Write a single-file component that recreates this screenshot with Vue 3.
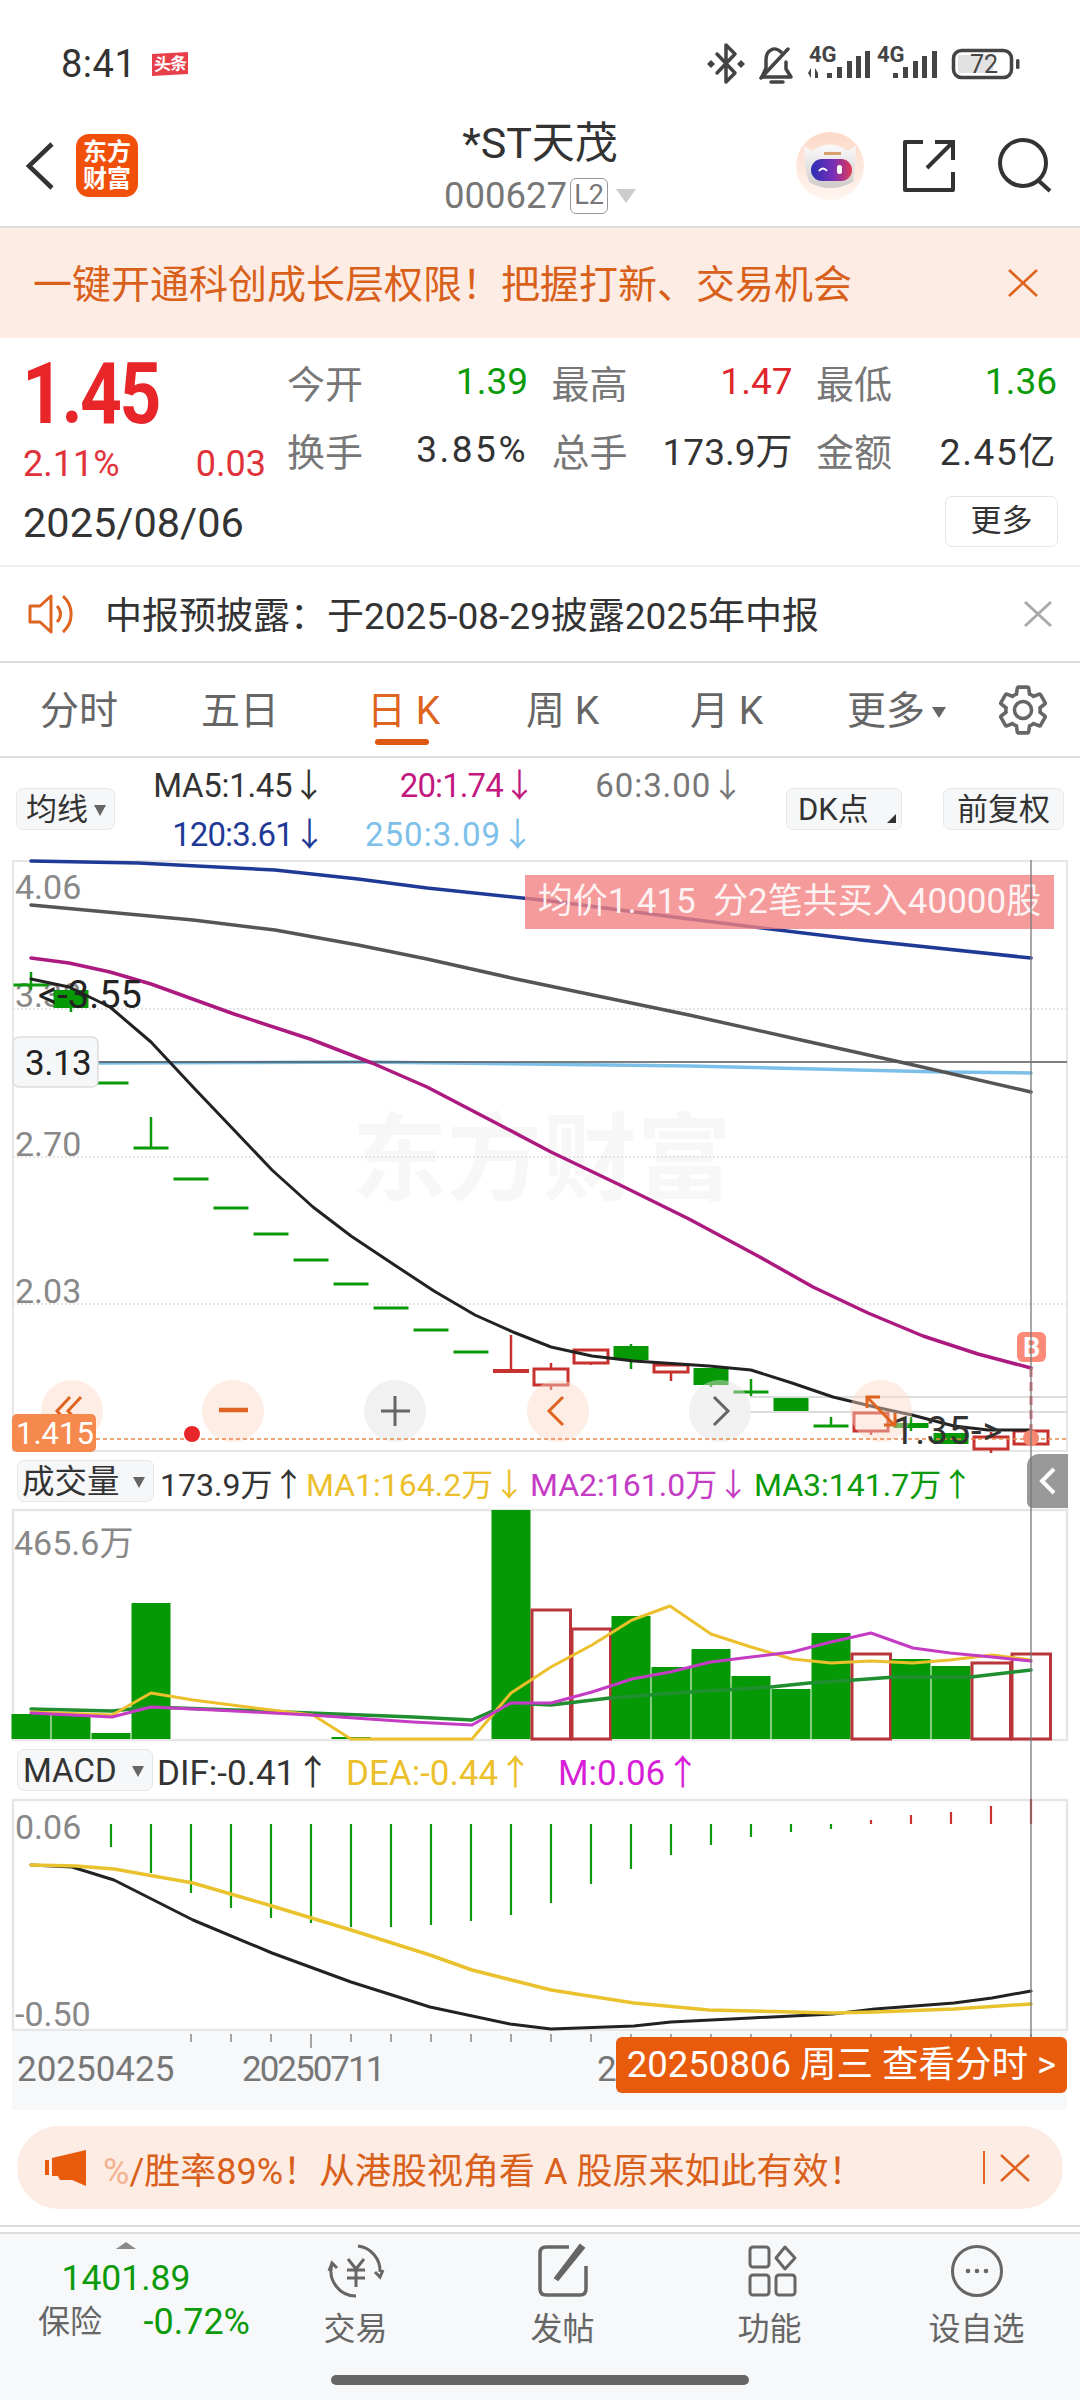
<script setup>
const pts = (a) => a.map((p) => p.join(',')).join(' ')
const X = (i) => 31 + 40 * i

const stats = [
  { l: '今开', v: '1.39', c: 'green' },
  { l: '最高', v: '1.47', c: 'red' },
  { l: '最低', v: '1.36', c: 'green' },
  { l: '换手', v: '3.85%', c: 'wide' },
  { l: '总手', v: '173.9万', c: '' },
  { l: '金额', v: '2.45亿', c: 'wide2' },
]

// i, kind, bodyTop, bodyBottom, wickTop, wickBottom
const candles = [
  [0, 'g', 985, 985, 972, 990], [1, 'g', 990, 1008, 988, 1012], [2, 'g', 1083, 1083, 1083, 1083],
  [3, 'g', 1148, 1148, 1117, 1148], [4, 'g', 1179, 1179, 1179, 1179], [5, 'g', 1208, 1208, 1208, 1208],
  [6, 'g', 1234, 1234, 1234, 1234], [7, 'g', 1260, 1260, 1260, 1260], [8, 'g', 1284, 1284, 1284, 1284],
  [9, 'g', 1308, 1308, 1308, 1308], [10, 'g', 1330, 1330, 1330, 1330], [11, 'g', 1352, 1352, 1352, 1352],
  [12, 'R', 1371, 1371, 1335, 1371], [13, 'r', 1369, 1385, 1363, 1390], [14, 'r', 1350, 1363, 1350, 1365],
  [15, 'g', 1346, 1360, 1344, 1369], [16, 'r', 1365, 1372, 1365, 1381], [17, 'g', 1368, 1385, 1368, 1387],
  [18, 'g', 1392, 1392, 1379, 1396], [19, 'g', 1398, 1411, 1398, 1411], [20, 'g', 1426, 1426, 1417, 1426],
  [21, 'r', 1413, 1431, 1413, 1435], [22, 'g', 1423, 1428, 1417, 1431], [23, 'g', 1433, 1444, 1433, 1444],
  [24, 'r', 1437, 1449, 1432, 1453], [25, 'r', 1431, 1444, 1431, 1444],
]
const flat = (c) => c[3] - c[2] < 3

const ma120 = [[31,861],[138,863],[275,870],[358,879],[427,888],[551,901],[689,919],[861,940],[1031,958]]
const ma60 = [[31,905],[193,920],[275,930],[358,945],[427,959],[516,979],[689,1015],[792,1038],[909,1064],[1031,1092]]
const ma20 = [[31,958],[69,963],[110,972],[151,984],[234,1014],[310,1039],[372,1063],[427,1087],[496,1123],[551,1152],[620,1185],[689,1219],[758,1256],[813,1287],[868,1313],[923,1336],[978,1354],[1031,1368]]
const ma5 = [[31,979],[69,987],[110,1007],[151,1042],[193,1087],[234,1130],[272,1170],[313,1207],[351,1236],[393,1264],[434,1291],[475,1315],[513,1332],[551,1347],[592,1356],[634,1361],[709,1366],[751,1370],[792,1383],[833,1397],[875,1407],[912,1415],[954,1426],[988,1430],[1031,1430]]
const ma250 = [[98,1063],[365,1062],[689,1066],[943,1072],[1031,1073]]

const circles = [
  [72, 'o'], [233, 'o'], [395, 'n'], [558, 'o'], [720, 'n'], [881, 'o'],
]

const bars = [
  [0,'g',1714],[1,'g',1715],[2,'g',1733],[3,'g',1603],[8,'g',1737],[12,'g',1510],[13,'r',1610],[14,'r',1629],
  [15,'g',1616],[16,'g',1667],[17,'g',1649],[18,'g',1676],[19,'g',1689],[20,'g',1633],[21,'r',1654],
  [22,'g',1659],[23,'g',1666],[24,'r',1663],[25,'r',1654],
]
const vol1 = [[31,1712],[112,1715],[151,1693],[193,1700],[255,1708],[313,1715],[351,1739],[472,1739],[511,1693],[551,1667],[592,1645],[632,1620],[670,1606],[711,1634],[751,1647],[792,1659],[831,1663],[871,1661],[913,1663],[950,1660],[992,1655],[1031,1660]]
const vol2 = [[31,1713],[112,1717],[151,1707],[234,1711],[310,1715],[413,1722],[472,1725],[511,1703],[551,1703],[592,1692],[632,1679],[670,1672],[711,1662],[751,1657],[792,1652],[831,1642],[871,1633],[913,1648],[950,1653],[992,1657],[1031,1661]]
const vol3 = [[31,1709],[112,1711],[151,1707],[234,1710],[310,1713],[413,1717],[472,1720],[511,1703],[551,1705],[610,1698],[689,1692],[771,1687],[809,1683],[854,1680],[895,1677],[971,1677],[1031,1670]]

const macd = [
  [2,1847],[3,1873],[4,1893],[5,1908],[6,1918],[7,1923],[8,1927],[9,1927],[10,1925],[11,1921],[12,1915],[13,1903],
  [14,1884],[15,1869],[16,1855],[17,1845],[18,1837],[19,1832],[20,1829],[21,1820],[22,1815],[23,1812],[24,1806],[25,1799],
]
const dea = [[31,1865],[76,1866],[114,1869],[193,1883],[272,1906],[351,1930],[430,1955],[472,1970],[551,1990],[634,2003],[709,2010],[792,2012],[833,2013],[875,2012],[954,2009],[1031,2004]]
const dif = [[31,1865],[72,1867],[114,1880],[193,1920],[272,1953],[351,1982],[430,2007],[510,2024],[551,2029],[634,2026],[671,2022],[751,2018],[833,2014],[875,2009],[954,2003],[992,1998],[1031,1991]]
const ticks = [4,5,6,7,8,9,10,11,12,13,14,15,16,17,18,19,20,21,22,23,24,25]
</script>

<template>
  <div class="page">
    <div class="status">
      <span class="time">8:41</span>
      <span class="toutiao">头条</span>
      <svg class="status-icons" viewBox="708 34 314 50" width="314" height="50">
        <g fill="none" stroke="#444" stroke-width="3.5" stroke-linejoin="round" stroke-linecap="round">
          <path d="M717 54 L735 73 L726 82 V45 L735 54 L717 73" />
          <path d="M788 49 L761 78" />
          <path d="M762 77 H791 L786 69 V62 M781 52 C778 49 774 48 771 50 C767 52 766 56 766 60 V68 L762 77" />
          <path d="M771 82 H783" />
          <rect x="953.5" y="50.5" width="58" height="27" rx="8" />
        </g>
        <path d="M711 60 l4 4 -4 4 -4 -4z M741 60 l4 4 -4 4 -4 -4z" fill="#444" />
        <text x="809" y="62" class="g4">4G</text>
        <text x="877" y="62" class="g4">4G</text>
        <path d="M811 68 v10 l-3 -5z M815 68 l3 5 h-3z M815 73 h3 v5 h-3z" fill="#444" />
        <g fill="#444">
          <rect x="827" y="73" width="5" height="5" /><rect x="837" y="67" width="5" height="11" /><rect x="847" y="61" width="5" height="17" /><rect x="856" y="56" width="5" height="22" /><rect x="865" y="51" width="5" height="27" />
          <rect x="893" y="73" width="5" height="5" /><rect x="903" y="67" width="5" height="11" /><rect x="913" y="61" width="5" height="17" /><rect x="922" y="56" width="5" height="22" /><rect x="932" y="51" width="5" height="27" />
          <rect x="1016" y="59" width="3.5" height="10" rx="1.5" />
        </g>
        <rect x="958" y="55" width="35" height="18" fill="#e2e2e2" />
        <text x="970" y="73" class="batt">72</text>
      </svg>
    </div>

    <header class="head">
      <div class="head-left">
        <svg class="back" viewBox="0 0 30 50" width="30" height="50"><path d="M27 3 L4 25 L27 47" fill="none" stroke="#333" stroke-width="4.5" /></svg>
        <div class="logo"><span>东方</span><span>财富</span></div>
      </div>
      <div class="head-mid">
        <div class="title">*ST天茂</div>
        <div class="code"><span>000627</span><span class="l2">L2</span><i class="tri-code"></i></div>
      </div>
      <div class="head-right">
        <svg class="avatar" viewBox="0 0 68 68" width="68" height="68">
          <defs>
            <linearGradient id="visor" x1="0" x2="1" y1="0" y2="0"><stop offset="0" stop-color="#2a2fb4" /><stop offset=".55" stop-color="#7a2fb8" /><stop offset="1" stop-color="#e03a55" /></linearGradient>
            <linearGradient id="peach" x1="0" x2="0" y1="0" y2="1"><stop offset="0" stop-color="#fdd9c8" /><stop offset="1" stop-color="#fff5f0" /></linearGradient>
            <linearGradient id="shell" x1="0" x2="0" y1="0" y2="1"><stop offset="0" stop-color="#fbfafa" /><stop offset="1" stop-color="#cfcaca" /></linearGradient>
          </defs>
          <circle cx="34" cy="34" r="34" fill="url(#peach)" />
          <path d="M8 14 L16 19 Q34 6 52 19 L60 14 L59 34 L57 50 Q34 62 13 50 L9 34Z" fill="url(#shell)" />
          <rect x="28" y="20" width="17" height="3" fill="#d9a070" />
          <rect x="15" y="27" width="41" height="22" rx="11" fill="url(#visor)" />
          <path d="M23 39 q4 -5 8 0" stroke="#fff" stroke-width="2" fill="none" />
          <rect x="41" y="33" width="5" height="9" rx="2.5" fill="#fff" />
        </svg>
        <svg class="share" viewBox="904 140 52 52" width="52" height="52">
          <path d="M924 142 H906 V190 H954 V172" fill="none" stroke="#333" stroke-width="4" stroke-linejoin="round" />
          <path d="M928 168 L953 143 M936 142 H954 V160" fill="none" stroke="#333" stroke-width="4" />
        </svg>
        <svg class="search" viewBox="999 138 54 54" width="54" height="54">
          <circle cx="1024" cy="163" r="23" fill="none" stroke="#333" stroke-width="4" />
          <path d="M1040 181 L1051 191" stroke="#333" stroke-width="4" />
        </svg>
      </div>
    </header>

    <div class="banner">
      <span class="ban-t">一键开通科创成长层权限！把握打新、交易机会</span>
      <svg viewBox="0 0 30 28" width="30" height="28"><path d="M1 1 L29 27 M29 1 L1 27" stroke="#de6420" stroke-width="2.6" fill="none" /></svg>
    </div>

    <section class="quote">
      <div class="quote-top">
        <div class="q-left">
          <div class="price">1.45</div>
          <div class="chg"><span>2.11%</span><span>0.03</span></div>
        </div>
        <div class="stats">
          <div v-for="s in stats" :key="s.l" class="stat">
            <span class="s-l">{{ s.l }}</span><span :class="['s-v', s.c]">{{ s.v }}</span>
          </div>
        </div>
      </div>
      <div class="quote-bot">
        <span class="date">2025/08/06</span>
        <span class="more">更多</span>
      </div>
    </section>

    <div class="notice">
      <svg viewBox="28 595 46 40" width="46" height="40">
        <path d="M30 607 H40 L51 597 V633 L40 623 H30Z M57 607 A11 11 0 0 1 57 623 M63 597 A24 24 0 0 1 63 633" fill="none" stroke="#de6420" stroke-width="3" stroke-linejoin="round" />
      </svg>
      <span class="n-text">中报预披露：于2025-08-29披露2025年中报</span>
      <svg viewBox="0 0 28 26" width="28" height="26"><path d="M1 1 L27 25 M27 1 L1 25" stroke="#aaa" stroke-width="3" fill="none" /></svg>
    </div>

    <nav class="tabs">
      <span class="tab t1">分时</span>
      <span class="tab t2">五日</span>
      <span class="tab t3 on">日 K</span>
      <span class="tab t4">周 K</span>
      <span class="tab t5">月 K</span>
      <span class="tab t6">更多<i class="tri-more"></i></span>
      <svg class="gear" viewBox="1.5 1.5 21 21" width="50" height="50">
        <path d="M19.14 12.94c.04-.3.06-.61.06-.94 0-.32-.02-.64-.07-.94l2.03-1.58a.49.49 0 0 0 .12-.61l-1.92-3.32a.488.488 0 0 0-.59-.22l-2.39.96c-.5-.38-1.03-.7-1.62-.94l-.36-2.54a.484.484 0 0 0-.48-.41h-3.84c-.24 0-.43.17-.47.41l-.36 2.54c-.59.24-1.13.57-1.62.94l-2.39-.96c-.22-.08-.47 0-.59.22L2.74 8.87c-.12.21-.08.47.12.61l2.03 1.58c-.05.3-.09.63-.09.94s.02.64.07.94l-2.03 1.58a.49.49 0 0 0-.12.61l1.92 3.32c.12.22.37.29.59.22l2.39-.96c.5.38 1.03.7 1.62.94l.36 2.54c.05.24.24.41.48.41h3.84c.24 0 .44-.17.47-.41l.36-2.54c.59-.24 1.13-.56 1.62-.94l2.39.96c.22.08.47 0 .59-.22l1.92-3.32c.12-.22.07-.47-.12-.61l-2.01-1.58zM12 15.6c-1.98 0-3.6-1.62-3.6-3.6s1.62-3.6 3.6-3.6 3.6 1.62 3.6 3.6-1.62 3.6-3.6 3.6z" fill="none" stroke="#666" stroke-width="1.5" />
      </svg>
    </nav>

    <div class="ma-row">
      <span class="chip c-ma">均线<i class="tri-chip"></i></span>
      <div class="ma-grid">
        <span class="black">MA5:1.45↓</span>
        <span class="mag">20:1.74↓</span>
        <span class="gray">60:3.00↓</span>
        <span class="blue">120:3.61↓</span>
        <span class="sky">250:3.09↓</span>
      </div>
      <span class="chip c-dk">DK点<i class="corner"></i></span>
      <span class="chip c-fq">前复权</span>
    </div>

    <div class="charts">
      <svg class="main" viewBox="0 860 1080 592" width="1080" height="592">
        <rect x="13" y="861" width="1054" height="590" fill="none" stroke="#e6e6e6" stroke-width="2" />
        <text x="352" y="1193" class="wm">东方财富</text>
        <g stroke="#e4e4e4" stroke-width="2" stroke-dasharray="2 2">
          <path d="M13 1009 H1067 M13 1157 H1067 M13 1304 H1067" />
        </g>
        <path d="M750 1397 H1067 M750 1412 H1067" stroke="#dcdcdc" stroke-width="2" />
        <text x="15" y="899" class="axis">4.06</text>
        <text x="15" y="1007" class="axis">3.38</text>
        <text x="15" y="1156" class="axis">2.70</text>
        <text x="15" y="1303" class="axis">2.03</text>
        <g v-for="c in candles" :key="c[0]">
          <template v-if="c[1] === 'g'">
            <path :d="`M${X(c[0])} ${c[4]} V${c[5]}`" stroke="#0a9a0a" stroke-width="2.5" />
            <path v-if="flat(c)" :d="`M${X(c[0]) - 17.5} ${c[2]} h35`" stroke="#0a9a0a" stroke-width="3" />
            <rect v-else :x="X(c[0]) - 17.5" :y="c[2]" width="35" :height="c[3] - c[2]" fill="#059a05" />
          </template>
          <template v-else-if="c[1] === 'R'">
            <path :d="`M${X(c[0])} ${c[4]} V${c[5]}`" stroke="#c8322e" stroke-width="2.5" />
            <path :d="`M${X(c[0]) - 18} ${c[2]} h36`" stroke="#c8322e" stroke-width="4" />
          </template>
          <template v-else>
            <path :d="`M${X(c[0])} ${c[4]} V${c[5]}`" stroke="#c8322e" stroke-width="2.5" />
            <rect :x="X(c[0]) - 17" :y="c[2]" width="34" :height="c[3] - c[2]" fill="#fff" stroke="#c8322e" stroke-width="3" />
          </template>
        </g>
        <polyline :points="pts(ma250)" class="ln" stroke="#7cc0ea" stroke-width="3.5" />
        <path d="M98 1062 H1067" stroke="#555" stroke-width="1.5" />
        <polyline :points="pts(ma120)" class="ln" stroke="#1f3a96" stroke-width="3.5" />
        <polyline :points="pts(ma60)" class="ln" stroke="#555" stroke-width="3.5" />
        <polyline :points="pts(ma20)" class="ln" stroke="#ac1a80" stroke-width="3.5" />
        <polyline :points="pts(ma5)" class="ln" stroke="#222" stroke-width="3" />

        <g v-for="c in circles" :key="c[0]">
          <ellipse :cx="c[0]" cy="1411" rx="31" ry="31" :fill="c[1] === 'o' ? 'rgba(250,215,195,.45)' : 'rgba(225,225,225,.45)'" />
        </g>
        <path d="M70 1397 L57 1411 L70 1425 M81 1397 L68 1411 L81 1425" fill="none" stroke="#de6420" stroke-width="3" />
        <path d="M219 1410 H248" stroke="#de6420" stroke-width="4.5" />
        <path d="M381 1411 H410 M395 1396 V1426" stroke="#666" stroke-width="3" />
        <path d="M563 1397 L549 1411 L563 1425" fill="none" stroke="#de6420" stroke-width="3" />
        <path d="M714 1397 L728 1411 L714 1425" fill="none" stroke="#666" stroke-width="3" />
        <path d="M867 1408 V1397 H880 M868 1398 L894 1425 M895 1413 V1425 H884" fill="none" stroke="#de6420" stroke-width="3" />

        <path d="M96 1439 H1067" stroke="#e8864a" stroke-width="1.5" stroke-dasharray="4 3" />
        <circle cx="192" cy="1434" r="8" fill="#e8262a" />
        <path d="M1031 1368 V1431" stroke="#d9737a" stroke-width="3" stroke-dasharray="9 5" />
        <circle cx="1031" cy="1438" r="8" fill="#f58870" />
        <rect x="1017" y="1332" width="29" height="30" rx="6" fill="#fb8a78" />
        <text x="1031.5" y="1357" class="b-mark">B</text>

        <text x="38" y="1008" class="tag">&lt;-3.55</text>
        <text x="893" y="1444" class="tag t135">1.35-&gt;</text>

        <rect x="13" y="1037" width="85" height="50" rx="6" fill="#f6f7f9" stroke="#ddd" stroke-width="1.5" />
        <text x="25" y="1075" class="lab-k">3.13</text>
        <rect x="12" y="1414" width="84" height="38" rx="5" fill="#f68a4e" />
        <text x="16" y="1444" class="lab-w">1.415</text>
      </svg>
      <div class="tip">均价1.415&nbsp;&nbsp;分2笔共买入40000股</div>

      <div class="ind-row vol">
        <span class="chip c-ind">成交量<i class="tri-chip"></i></span>
        <span class="i1">173.9万↑</span>
        <span class="i2 yel">MA1:164.2万↓</span>
        <span class="i3 pur">MA2:161.0万↓</span>
        <span class="i4 grn">MA3:141.7万↑</span>
      </div>
      <svg class="volc" viewBox="0 1509 1080 232" width="1080" height="232">
        <rect x="13" y="1510" width="1054" height="230" fill="none" stroke="#e6e6e6" stroke-width="2.5" />
        <text x="14" y="1555" class="axis">465.6万</text>
        <g v-for="b in bars" :key="b[0]">
          <rect v-if="b[1] === 'g'" :x="X(b[0]) - 19.5" :y="b[2]" width="39" :height="1739 - b[2]" fill="#059a05" />
          <rect v-else :x="X(b[0]) - 19" :y="b[2]" width="38.5" :height="1739 - b[2]" fill="#fff" stroke="#b8353a" stroke-width="3" />
        </g>
        <polyline :points="pts(vol3)" class="ln" stroke="#1f8f2f" stroke-width="3.5" />
        <polyline :points="pts(vol1)" class="ln" stroke="#ecbf2c" stroke-width="3" />
        <polyline :points="pts(vol2)" class="ln" stroke="#c43cc4" stroke-width="3" />
      </svg>

      <div class="ind-row mac">
        <span class="chip c-ind2">MACD<i class="tri-chip"></i></span>
        <span class="m1">DIF:-0.41↑</span>
        <span class="m2 yel2">DEA:-0.44↑</span>
        <span class="m3 pnk">M:0.06↑</span>
      </div>
      <svg class="macc" viewBox="0 1799 1080 232" width="1080" height="232">
        <rect x="13" y="1800" width="1054" height="230" fill="none" stroke="#e6e6e6" stroke-width="2.5" />
        <text x="15" y="1839" class="axis">0.06</text>
        <text x="15" y="2026" class="axis">-0.50</text>
        <path v-for="m in macd" :key="m[0]" :d="`M${X(m[0])} 1824 V${m[1]}`" :stroke="m[0] < 21 ? '#0a9a0a' : '#c8322e'" stroke-width="2.2" />
        <polyline :points="pts(dif)" class="ln" stroke="#222" stroke-width="3" />
        <polyline :points="pts(dea)" class="ln" stroke="#e9c22e" stroke-width="3.5" />
      </svg>

      <div class="axisbar">
        <svg class="ticks" viewBox="0 0 1055 16" width="1055" height="16">
          <path v-for="t in ticks" :key="t" :d="`M${X(t) - 12} 2 V${t === 7 ? 16 : 10}`" stroke="#888" stroke-width="1.5" />
        </svg>
        <div class="dates"><span class="d1">20250425</span><span class="d2">20250711</span><span class="d3">2</span></div>
        <div class="go">20250806 周三 查看分时 &gt;</div>
      </div>

      <div class="handle"><svg viewBox="0 0 18 28" width="18" height="28"><path d="M15 2 L3 14 L15 26" fill="none" stroke="#fff" stroke-width="4" /></svg></div>
      <div class="cross"></div>
    </div>

    <div class="ad">
      <svg viewBox="45 2150 41 36" width="41" height="36">
        <path d="M45 2160 h4 v15 h-4z M52 2158 L86 2150 V2186 L72 2180 L60 2180 L58 2176 H52Z" fill="#e85a0c" />
      </svg>
      <span class="ad-text"><b>%</b>/胜率89%！从港股视角看 A 股原来如此有效！</span>
      <i class="ad-sep"></i>
      <svg viewBox="0 0 30 28" width="30" height="28"><path d="M1 1 L29 27 M29 1 L1 27" stroke="#de6420" stroke-width="2.6" fill="none" /></svg>
    </div>

    <div class="rule"></div>

    <footer class="foot">
      <div class="idx">
        <i class="tri-up"></i>
        <div class="idx-v">1401.89</div>
        <div class="idx-r"><span>保险</span><b>-0.72%</b></div>
      </div>
      <div class="nav">
        <svg viewBox="0 0 60 54" width="60" height="54">
          <path d="M32 2 A25 25 0 0 1 54 28 M30 52 A25 25 0 0 1 6 20" fill="none" stroke="#666" stroke-width="3" />
          <path d="M3 27 L6 19 L11 24" fill="none" stroke="#666" stroke-width="3" />
          <path d="M57 26 L54 33 L49 28" fill="none" stroke="#666" stroke-width="3" />
          <path d="M22 15 L30 25 L38 15 M21 26 H39 M21 34 H39 M30 25 V43" fill="none" stroke="#666" stroke-width="3" />
        </svg>
        <span>交易</span>
      </div>
      <div class="nav">
        <svg viewBox="0 0 60 54" width="60" height="54">
          <path d="M36 3 H13 Q7 3 7 9 V45 Q7 51 13 51 H47 Q53 51 53 45 V22" fill="none" stroke="#666" stroke-width="3.5" />
          <path d="M22 34 L25 36 L51 4 L47 1Z" fill="#666" stroke="#666" stroke-width="2" />
        </svg>
        <span>发帖</span>
      </div>
      <div class="nav">
        <svg viewBox="0 0 60 54" width="60" height="54">
          <g fill="none" stroke="#666" stroke-width="3">
            <rect x="10" y="3" width="19" height="20" rx="3" />
            <rect x="10" y="31" width="19" height="20" rx="3" />
            <rect x="36" y="31" width="19" height="20" rx="3" />
            <path d="M45 3 L55 14 L45 25 L36 14Z" stroke-linejoin="round" />
          </g>
        </svg>
        <span>功能</span>
      </div>
      <div class="nav">
        <svg viewBox="0 0 60 54" width="60" height="54">
          <circle cx="30" cy="27" r="24.5" fill="none" stroke="#666" stroke-width="3" />
          <circle cx="21" cy="27" r="2.3" fill="#666" /><circle cx="30" cy="27" r="2.3" fill="#666" /><circle cx="39" cy="27" r="2.3" fill="#666" />
        </svg>
        <span>设自选</span>
      </div>
      <div class="homebar"></div>
    </footer>
  </div>
</template>

<style scoped>
.page {
  width: 1080px;
  height: 2400px;
  overflow: hidden;
  background: #fff;
  display: flex;
  flex-direction: column;
  font-family: Roboto, "Noto Sans CJK SC", sans-serif;
  color: #333;
}
.page i { font-style: normal; display: inline-block; }
svg { display: block; flex: none; overflow: visible; }

.status {
  height: 105px;
  box-sizing: border-box;
  padding: 23px 0 0 61px;
  display: flex;
  align-items: center;
}
.time { font-size: 38px; color: #333; width: 91px; letter-spacing: .5px; }
.toutiao {
  width: 36px; height: 22px; background: #e8404a; color: #fff;
  font-size: 17px; line-height: 22px; text-align: center; font-weight: 700;
  letter-spacing: -1px; transform: skewY(-3deg);
}
.status-icons { margin-left: 520px; margin-bottom: 10px; }
.g4 { font-size: 22px; font-weight: 700; fill: #444; font-family: Roboto, sans-serif; }
.batt { font-size: 25px; fill: #444; font-family: Roboto, sans-serif; }

.head {
  height: 123px;
  box-sizing: border-box;
  border-bottom: 2px solid #ddd;
  display: grid;
  grid-template-columns: 1fr auto 1fr;
  position: relative;
}
.head-left { display: flex; align-items: flex-start; padding: 29px 0 0 25px; }
.back { margin-top: 7px; }
.logo {
  margin-left: 21px; width: 62px; height: 63px; background: #f0500a; border-radius: 13px;
  color: #fff; font-size: 24px; font-weight: 700; line-height: 27px;
  display: flex; flex-direction: column; align-items: center; justify-content: center;
}
.head-mid { display: flex; flex-direction: column; align-items: center; padding-top: 14px; }
.title { font-size: 43px; line-height: 48px; color: #333; }
.code { display: flex; align-items: center; font-size: 36.5px; line-height: 40px; color: #777; margin-top: 9px; }
.l2 {
  margin-left: 3px; width: 38px; height: 36px; box-sizing: border-box; border: 1.5px solid #999;
  border-radius: 6px; font-size: 27px; line-height: 33px; text-align: center;
}
.tri-code {
  margin-left: 8px; width: 0; height: 0; border-left: 10px solid transparent;
  border-right: 10px solid transparent; border-top: 14px solid #ccc;
}
.head-right { display: flex; align-items: flex-start; justify-content: flex-end; padding: 27px 28px 0 0; }
.share { margin: 8px 0 0 39px; }
.search { margin: 6px 0 0 43px; }

.banner {
  height: 110px; background: #fcece4; display: flex; align-items: center;
  justify-content: space-between; padding: 0 42px 0 33px; color: #d9601a;
  font-size: 39px;
}
.ban-t { margin-top: -5px; }

.quote { height: 229px; box-sizing: border-box; border-bottom: 2px solid #eee; padding: 0 22px 0 22px; }
.quote-top { display: flex; height: 154px; }
.q-left { width: 245px; }
.price {
  font-size: 86px; line-height: 84px; margin-top: 14px; margin-bottom: -3px; color: #e8262a; font-weight: 700; letter-spacing: -3px;
  transform: scaleX(.85); transform-origin: left center;
}
.chg { display: flex; justify-content: space-between; color: #e0323a; font-size: 36px; line-height: 48px; width: 243px; margin: 7px 0 0 1px; }
.stats { margin: 9px 0 0 22px; display: grid; grid-template-columns: repeat(3, 239px); grid-auto-rows: 68px; column-gap: 25.5px; }
.stat { display: flex; justify-content: space-between; align-items: center; }
.s-l { font-size: 38px; color: #777; margin-left: -2px; }
.s-v { font-size: 37px; color: #333; }
.s-v.green { color: #0a9a0a; }
.s-v.red { color: #e0262a; }
.s-v.wide { letter-spacing: 2.5px; }
.s-v.wide2 { letter-spacing: 1.6px; }
.quote-bot { display: flex; justify-content: space-between; align-items: flex-start; }
.date { font-size: 41.5px; line-height: 50px; color: #333; margin: 6px 0 0 1px; }
.more {
  width: 113px; height: 51px; box-sizing: border-box; border: 1.5px solid #e5e5e5; border-radius: 7px;
  text-align: center; font-size: 31px; line-height: 47px; color: #333; margin-right: 0; margin-top: 4px;
}

.notice {
  height: 96px; box-sizing: border-box; border-bottom: 2px solid #ddd; display: flex; align-items: center;
  padding: 0 28px 0 28px;
}
.n-text { font-size: 37px; margin-left: 31px; flex: 1; color: #333; margin-top: -2px; }

.tabs {
  height: 95px; box-sizing: border-box; border-bottom: 2px solid #ddd; position: relative;
}
.tab { position: absolute; top: 23px; font-size: 39px; line-height: 50px; color: #666; white-space: nowrap; }
.t1 { left: 40px; } .t2 { left: 201px; } .t3 { left: 367px; } .t4 { left: 526px; } .t5 { left: 690px; } .t6 { left: 847px; }
.t3.on { color: #de6420; }
.t3.on::after {
  content: ""; position: absolute; left: 8px; width: 54px; height: 6px; bottom: -9px;
  background: #de5a12; border-radius: 3px;
}
.tri-more {
  margin-left: 7px; width: 0; height: 0; border-left: 7px solid transparent; border-right: 7px solid transparent;
  border-top: 11px solid #666; vertical-align: 6px;
}
.gear { position: absolute; left: 998px; top: 22px; }

.ma-row { height: 102px; display: flex; align-items: center; padding-left: 16px; }
.chip {
  height: 42px; box-sizing: border-box; background: #f6f7f9; border: 1px solid #e8e8e8; border-radius: 7px;
  font-size: 31px; line-height: 42px; color: #333; flex: none; white-space: nowrap; position: relative;
}
.c-ma { width: 99px; padding-left: 9px; }
.tri-chip {
  position: absolute; top: 16px; width: 0; height: 0; border-left: 6px solid transparent;
  border-right: 6px solid transparent; border-top: 11px solid #666; right: 8px;
}
.ma-grid {
  width: 605px; margin-left: 15px; display: grid; grid-template-columns: 195px 210px 210px; grid-auto-rows: 49px;
  font-size: 33px; line-height: 49px; text-align: right; letter-spacing: -.3px; margin-top: 2px;
}
.black { color: #333; } .mag { color: #c2187f; letter-spacing: -.9px; } .gray { color: #777; letter-spacing: .9px; }
.blue { color: #1f3a96; letter-spacing: -.9px; } .sky { color: #7cc0ea; letter-spacing: 1px; }
.c-dk { width: 116px; margin-left: 51px; padding-left: 11px; }
.corner {
  position: absolute; right: 5px; bottom: 6px; width: 0; height: 0; border-left: 9px solid transparent;
  border-bottom: 9px solid #333;
}
.c-fq { width: 121px; margin-left: 41px; text-align: center; }

.charts { position: relative; }
.tip {
  position: absolute; left: 525px; top: 15px; width: 529px; height: 54px; box-sizing: border-box;
  background: rgba(243, 130, 130, .8); color: rgba(255, 255, 255, .9); font-size: 35px; line-height: 54px;
  text-align: center; white-space: nowrap;
}
.ln { fill: none; stroke-linejoin: round; stroke-linecap: round; }
.wm { font-size: 95px; font-weight: 700; fill: #f7f7f7; font-family: "Noto Sans CJK SC", sans-serif; }
.axis { font-size: 34px; fill: #888; font-family: Roboto, "Noto Sans CJK SC", sans-serif; }
.tag { font-size: 38px; fill: #222; font-family: Roboto, sans-serif; }
.t135 { letter-spacing: 1px; fill: #333; }
.lab-k { font-size: 35px; fill: #222; font-family: Roboto, sans-serif; letter-spacing: -.5px; }
.lab-w { font-size: 31px; fill: #fff; font-family: Roboto, sans-serif; }
.b-mark { font-size: 27px; font-weight: 700; fill: #fff; text-anchor: middle; font-family: Roboto, sans-serif; }

.ind-row { height: 57px; position: relative; display: flex; align-items: center; padding-left: 17px; font-size: 32px; white-space: nowrap; color: #333; }
.ind-row > span:not(.chip) { margin-top: 3px; }
.c-ind { width: 137px; padding-left: 4px; font-size: 32.5px; }
.c-ind2 { width: 136px; padding-left: 5px; font-size: 33px; }
.i1 { margin-left: 6px; width: 146px; } .i2 { width: 224px; } .i3 { width: 224px; }
.yel { color: #ecbf2c; } .pur { color: #c43cc4; } .grn { color: #0a9a0a; }
.mac { height: 58px; font-size: 35px; }
.mac > span:not(.chip) { margin-top: -1px; }
.m1 { margin-left: 4px; width: 189px; } .m2 { width: 212px; }
.yel2 { color: #ecbf2c; } .pnk { color: #d81fd8; }

.axisbar { position: relative; margin: 0 13px 0 12px; height: 79px; background: #f7f8fa; }
.ticks { padding-top: 1px; }
.dates { font-size: 35px; line-height: 38px; color: #777; position: relative; height: 42px; margin-top: 3px; display: flex; }
.d1 { margin-left: 5px; width: 225px; } .d2 { width: 355px; letter-spacing: -2px; }
.go {
  position: absolute; left: 604px; top: 6px; width: 451px; height: 56px; background: #e85a0c; border-radius: 6px;
  color: #fff; font-size: 36.5px; line-height: 56px; text-align: center; white-space: nowrap;
}
.handle {
  position: absolute; left: 1027px; top: 594px; width: 41px; height: 54px; background: #999;
  border-top-left-radius: 12px; border-bottom-left-radius: 6px; display: flex; align-items: center; justify-content: center;
}
.cross { position: absolute; left: 1030px; top: 0; width: 2px; height: 1177px; background: rgba(120,120,120,.65); }

.ad {
  margin: 16px 17px 0; height: 83px; border-radius: 42px; background: #fcece4; display: flex; align-items: center;
  padding-left: 28px; color: #d9601a;
}
.ad-text { font-size: 36px; margin-left: 17px; width: 880px; white-space: nowrap; }
.ad-text b { font-weight: 400; color: #f2b393; }
.ad-sep { width: 1.5px; height: 33px; background: #de6420; margin-right: 15px; }

.rule { margin-top: 16px; height: 5px; border-top: 2px solid #ddd; flex: none; }

.foot {
  flex: 1; background: #f7f8fa; border-top: 2px solid #ddd; display: grid; grid-template-columns: 252px repeat(4, 207px);
  position: relative;
}
.idx { padding-top: 8px; display: flex; flex-direction: column; align-items: center; position: relative; }
.tri-up { width: 0; height: 0; border-left: 10px solid transparent; border-right: 10px solid transparent; border-bottom: 7px solid #888; }
.idx-v { font-size: 35.5px; line-height: 44px; color: #0a9a0a; margin-top: 7px; }
.idx-r { display: flex; align-self: flex-start; margin-left: 38px; width: 212px; justify-content: space-between; align-items: center; font-size: 32px; line-height: 44px; color: #666; }
.idx-r b { font-weight: 400; color: #0a9a0a; font-size: 36px; }
.nav { display: flex; flex-direction: column; align-items: center; padding-top: 10px; font-size: 32px; line-height: 40px; color: #666; }
.nav span { margin-top: 11px; }
.homebar { position: absolute; left: 331px; top: 141px; width: 418px; height: 10px; border-radius: 5px; background: #666; }
</style>
